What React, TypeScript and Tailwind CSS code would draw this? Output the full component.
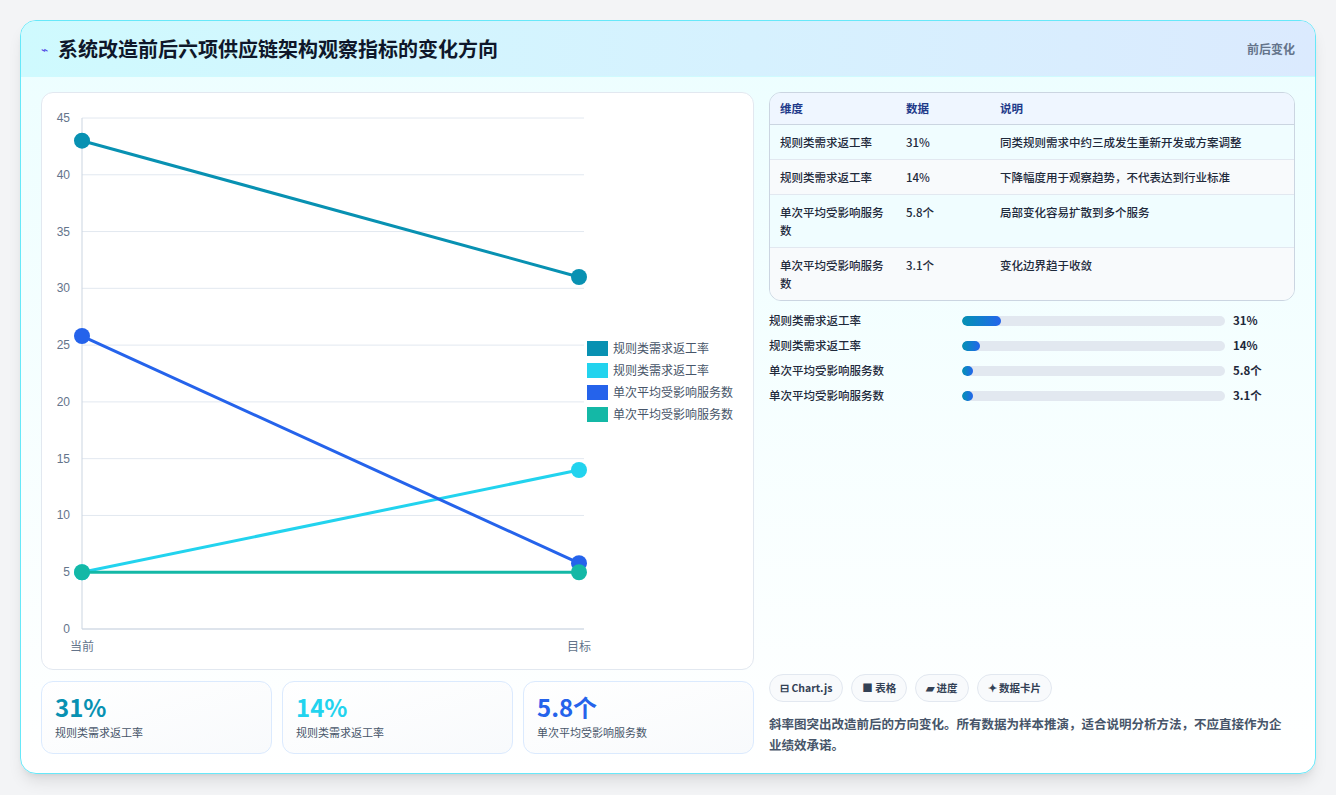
import React from "react";

const F = { fontFamily: '"Noto Sans CJK SC", "Noto Sans", sans-serif' };

const lines = [
  { a: 43, b: 31, c: "#0891b2" },
  { a: 5, b: 14, c: "#22d3ee" },
  { a: 25.8, b: 5.8, c: "#2563eb" },
  { a: 5, b: 5, c: "#14b8a6" },
];
const X0 = 40, X1 = 537, Y0 = 536, K = 511 / 45;
const y = (v: number) => Y0 - v * K;

function Chart() {
  return (
    <svg width="713" height="578" className="block">
      {[0, 5, 10, 15, 20, 25, 30, 35, 40, 45].map((t) => (
        <g key={t}>
          <line x1={X0} x2={X1 + 5} y1={y(t)} y2={y(t)} stroke="#e2e8f0" strokeWidth="1" />
          <text x={28} y={y(t) + 4} textAnchor="end" fontSize="12" fill="#64748b" fontFamily="Liberation Sans, sans-serif">{t}</text>
        </g>
      ))}
      <line x1={X0} x2={X0} y1={y(45)} y2={Y0} stroke="#cbd5e1" />
      <line x1={X0} x2={X1 + 5} y1={Y0} y2={Y0} stroke="#cbd5e1" />
      <text x={X0} y={Y0 + 22} textAnchor="middle" fontSize="12" fill="#64748b" style={F}>当前</text>
      <text x={X1} y={Y0 + 22} textAnchor="middle" fontSize="12" fill="#64748b" style={F}>目标</text>
      {lines.map((l, i) => (
        <g key={i}>
          <line x1={X0} y1={y(l.a)} x2={X1} y2={y(l.b)} stroke={l.c} strokeWidth="3" />
          <circle cx={X0} cy={y(l.a)} r="8" fill={l.c} />
          <circle cx={X1} cy={y(l.b)} r="8" fill={l.c} />
        </g>
      ))}
      {["规则类需求返工率", "规则类需求返工率", "单次平均受影响服务数", "单次平均受影响服务数"].map((t, i) => (
        <g key={i}>
          <rect x={545} y={248 + i * 22} width={21} height={15} fill={lines[i].c} />
          <text x={571} y={260 + i * 22} fontSize="12" fill="#475569" style={F}>{t}</text>
        </g>
      ))}
    </svg>
  );
}

const rows = [
  ["规则类需求返工率", "31%", "同类规则需求中约三成发生重新开发或方案调整"],
  ["规则类需求返工率", "14%", "下降幅度用于观察趋势，不代表达到行业标准"],
  ["单次平均受影响服务数", "5.8个", "局部变化容易扩散到多个服务"],
  ["单次平均受影响服务数", "3.1个", "变化边界趋于收敛"],
];
const bars = [
  ["规则类需求返工率", 15, "31%"],
  ["规则类需求返工率", 7, "14%"],
  ["单次平均受影响服务数", 4, "5.8个"],
  ["单次平均受影响服务数", 4, "3.1个"],
] as const;

export default function App() {
  return (
    <div className="w-[1336px] h-[795px] bg-[#f3f4f6] pt-5 pl-5" style={F}>
      <div className="w-[1296px] h-[754px] rounded-2xl border border-[#67e8f9] overflow-hidden bg-gradient-to-b from-[#ecfeff] to-white shadow-lg flex flex-col">
        <div className="h-[56px] shrink-0 flex items-center justify-between px-5 bg-gradient-to-r from-[#cffafe] to-[#dbeafe] border-b border-[#cffafe]">
          <div className="flex items-center gap-2.5">
            <span className="text-[12px] text-[#4f46e5]">⌁</span>
            <span className="text-[20px] font-bold text-[#0f172a]">系统改造前后六项供应链架构观察指标的变化方向</span>
          </div>
          <span className="text-[12px] font-bold text-[#64748b]">前后变化</span>
        </div>
        <div className="flex-1 flex gap-[15px] px-5 pt-[15px] pb-[18px]">
          <div className="w-[713px] flex flex-col gap-[11px]">
            <div className="h-[578px] bg-white rounded-xl border border-[#e2e8f0]">
              <Chart />
            </div>
            <div className="flex gap-[10px]">
              {[["31%", "text-[#0891b2]"], ["14%", "text-[#22d3ee]"], ["5.8个", "text-[#2563eb]"]].map(([v, c], i) => (
                <div key={i} className="w-[231px] h-[73px] rounded-xl border border-[#dbeafe] bg-gradient-to-br from-white to-[#f8fafc] px-[13px] pt-2.5">
                  <div className={`text-[24px] font-bold leading-[30px] ${c}`}>{v}</div>
                  <div className="text-[11px] text-[#475569] mt-0.5">{i < 2 ? "规则类需求返工率" : "单次平均受影响服务数"}</div>
                </div>
              ))}
            </div>
          </div>
          <div className="w-[528px] flex flex-col">
            <div className="rounded-xl border border-[#cbd5e1] overflow-hidden text-[11.5px]">
              <div className="flex h-[32px] items-center bg-[#eff6ff] border-b border-[#cbd5e1] font-bold text-[#1e3a8a] px-2.5">
                <div className="w-[126px]">维度</div><div className="w-[94px]">数据</div><div>说明</div>
              </div>
              {rows.map((r, i) => (
                <div key={i} className={`flex px-2.5 py-[8px] leading-[18px] text-[#1e293b] font-medium ${i % 2 ? "bg-[#f8fafc]" : "bg-[#f0fdff]"} ${i < 3 ? "border-b border-[#e2e8f0]" : ""}`}>
                  <div className="w-[126px] pr-[14px]">{r[0]}</div><div className="w-[94px]">{r[1]}</div><div>{r[2]}</div>
                </div>
              ))}
            </div>
            <div className="flex flex-col gap-[7px] mt-[11px]">
              {bars.map(([l, w, v], i) => (
                <div key={i} className="flex items-center h-[18px] text-[11.5px] text-[#1e293b] font-medium">
                  <div className="w-[193px]">{l}</div>
                  <div className="w-[263px] h-[10px] rounded-full bg-[#e2e8f0] overflow-hidden">
                    <div className="h-full rounded-full bg-gradient-to-r from-[#0891b2] to-[#2563eb]" style={{ width: `${w}%` }} />
                  </div>
                  <div className="ml-2 font-bold">{v}</div>
                </div>
              ))}
            </div>
            <div className="mt-auto">
              <div className="flex gap-2 mb-[11px]">
                {["⊟ Chart.js", "■ 表格", "▰ 进度", "✦ 数据卡片"].map((t) => (
                  <span key={t} className="h-[28px] px-2.5 flex items-center rounded-full border border-[#e2e8f0] bg-[#f8fafc] text-[10.5px] font-bold text-[#334155]">{t}</span>
                ))}
              </div>
              <div className="w-[520px] text-[12.5px] leading-[21px] font-bold text-[#475569]">
                斜率图突出改造前后的方向变化。所有数据为样本推演，适合说明分析方法，不应直接作为企业绩效承诺。
              </div>
            </div>
          </div>
        </div>
      </div>
    </div>
  );
}
